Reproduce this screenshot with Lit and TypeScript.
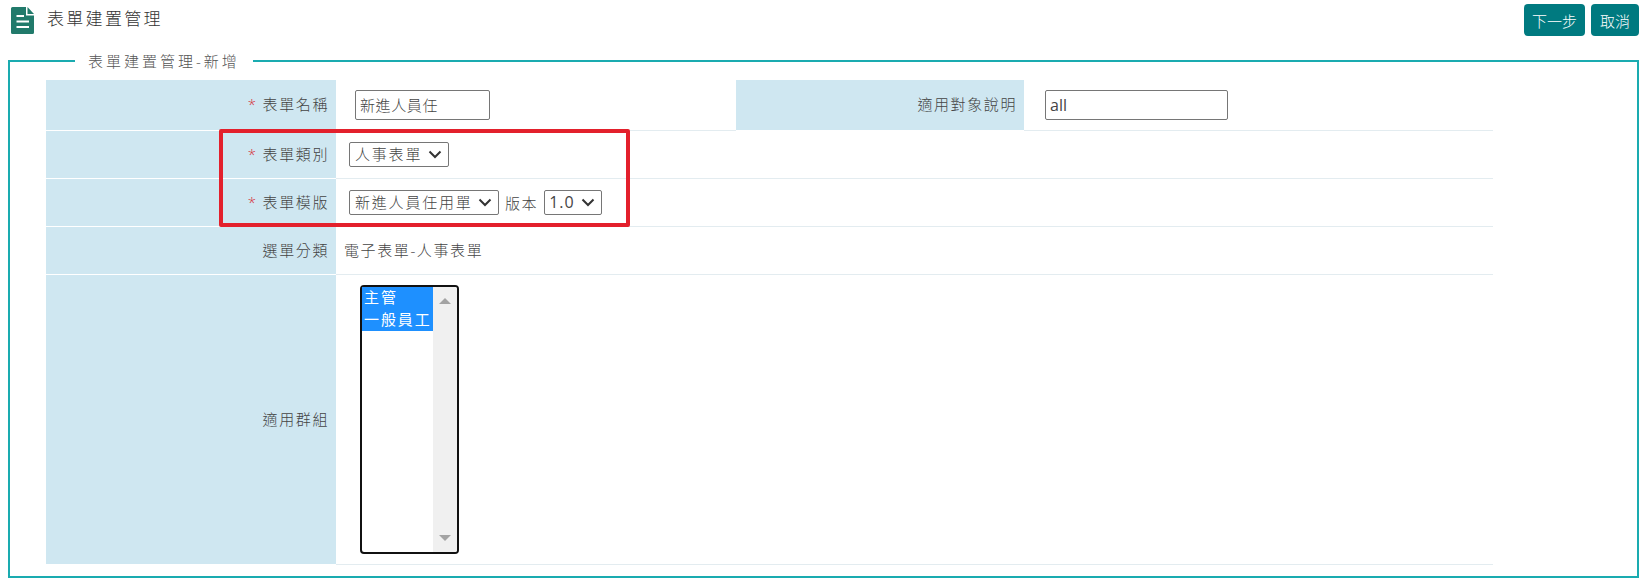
import { LitElement, html, css } from "lit";
import { customElement } from "lit/decorators.js";

@customElement("app-root")
export class AppRoot extends LitElement {
  static styles = css`
    :host { display: block; width: 1648px; height: 586px; position: relative; overflow: hidden; background: #fff;
      font-family: "Open Sans", "Noto Sans CJK TC", sans-serif; font-size: 15px; font-weight: 300; color: #444; }
    .top { display: flex; justify-content: space-between; height: 52px; box-sizing: border-box; padding: 4px 9px 0 11px; }
    .brand { display: flex; align-items: flex-start; gap: 13px; }
    .brand svg { display: block; margin-top: 3px; }
    .title { font-size: 17px; letter-spacing: 2.300px; line-height: 32px; margin-top: -1px; color: #333; }
    .btns { display: flex; gap: 6px; }
    button { height: 32px; border: 0; border-radius: 4px; background: #007a80; color: #fff; padding: 0; font: inherit; font-size: 15px; }
    .next { width: 61px; }
    .cancel { width: 48px; }
    fieldset { margin: 0 9px 0 8px; padding: 0 0 0 36px; height: 526px; box-sizing: border-box; border: 2px solid #1aabb0; min-width: 0; }
    legend { margin-left: 29px; padding: 0 13px; font-size: 15px; letter-spacing: 3px; line-height: 18px; color: #555; height: 18px; }
    table { border-collapse: collapse; table-layout: fixed; width: 1447px; margin-top: 10px; }
    td { padding: 0; border-bottom: 1px solid #e3ecf0; vertical-align: middle; }
    th { padding: 0 7px 2px 0; background: #cfe7f1; border-bottom: 1px solid #fff; font-weight: 300; text-align: right; font-size: 15px; letter-spacing: 1.600px; color: #444; }
    .r1 { height: 50px; }
    .r2 { height: 48px; }
    .r3 { height: 48px; }
    .r4 { height: 290px; }
    .star { color: #d6303a; margin-right: 5px; }
    .in { box-sizing: border-box; height: 30px; display: block; border: 1px solid #767676; border-radius: 2px; padding: 0 4px; background: #fff; color: #444; font: inherit; font-size: 15px; letter-spacing: 0.600px; }
    .in1 { width: 135px; margin-left: 19px; }
    .in2 { width: 183px; margin-left: 21px; letter-spacing: 0; font-size: 16px; font-weight: 400; }
    .cell { display: flex; align-items: center; padding-left: 13px; }
    .sel { box-sizing: border-box; height: 25px; display: flex; align-items: center; justify-content: space-between; border: 1px solid #767676; border-radius: 2px; padding: 0 6px 0 5px; font-size: 15px; letter-spacing: 1.800px; color: #444; line-height: 1; white-space: nowrap; }
    .s1 { width: 100px; }
    .s2 { width: 150px; }
    .s3 { width: 58px; font-size: 16px; font-weight: 400; letter-spacing: 1px; padding-left: 4px; }
    .ver { margin: 0 6px 0 6px; font-size: 15px; letter-spacing: 1.600px; color: #444; }
    .txt { padding: 0 0 2px 8px; font-size: 15px; letter-spacing: 1.600px; color: #444; }
    .list { box-sizing: border-box; width: 99px; height: 269px; margin: 10px 0 10px 24px; border: 2px solid #111; border-radius: 4px; display: flex; }
    .opts { flex: 1; min-width: 0; }
    .opt { height: 22px; box-sizing: border-box; line-height: 20px; background: #1e90ff; color: #fff; font-size: 15px; font-weight: 400; letter-spacing: 1.900px; padding-left: 2px; white-space: nowrap; }
    .bar { width: 24px; background: #f0f0f0; display: flex; flex-direction: column; justify-content: space-between; align-items: center; padding: 11px 0; box-sizing: border-box; border-radius: 0 2px 2px 0; }
    .mark { position: absolute; left: 219px; top: 129px; width: 411px; height: 98px; box-sizing: border-box; border: 4px solid #e3202c; border-radius: 2px; pointer-events: none; }
  `;

  private chevron() {
    return html`<svg width="14" height="9" viewBox="0 0 14 9"><path d="M1.500 1.500 7 7l5.500-5.500" fill="none" stroke="#333" stroke-width="2"/></svg>`;
  }

  render() {
    return html`
      <div class="top">
        <div class="brand">
          <svg width="23" height="27" viewBox="0 0 23 27">
            <path d="M1.500 0H15V8.500H23V25.500Q23 27 21.500 27H1.500Q0 27 0 25.500V1.500Q0 0 1.500 0Z" fill="#217a6b"/>
            <path d="M16.500 0 23 7H16.500Z" fill="#217a6b"/>
            <path d="M5.500 9H13M5.500 14.500H18M5.500 20H18" stroke="#fff" stroke-width="1.800"/>
          </svg>
          <div class="title">表單建置管理</div>
        </div>
        <div class="btns">
          <button class="next">下一步</button>
          <button class="cancel">取消</button>
        </div>
      </div>
      <fieldset>
        <legend>表單建置管理-新增</legend>
        <table>
          <colgroup><col style="width:290px" /><col style="width:400px" /><col style="width:288px" /><col style="width:469px" /></colgroup>
          <tr class="r1">
            <th><span class="star">*</span>表單名稱</th>
            <td><input class="in in1" .value=${"新進人員任"} /></td>
            <th>適用對象說明</th>
            <td><input class="in in2" .value=${"all"} /></td>
          </tr>
          <tr class="r2">
            <th><span class="star">*</span>表單類別</th>
            <td colspan="3"><div class="cell"><div class="sel s1">人事表單${this.chevron()}</div></div></td>
          </tr>
          <tr class="r2">
            <th><span class="star">*</span>表單模版</th>
            <td colspan="3"><div class="cell"><div class="sel s2">新進人員任用單${this.chevron()}</div><span class="ver">版本</span><div class="sel s3">1.0${this.chevron()}</div></div></td>
          </tr>
          <tr class="r3">
            <th>選單分類</th>
            <td colspan="3"><div class="txt">電子表單-人事表單</div></td>
          </tr>
          <tr class="r4">
            <th>適用群組</th>
            <td colspan="3">
              <div class="list">
                <div class="opts"><div class="opt">主管</div><div class="opt">一般員工</div></div>
                <div class="bar">
                  <svg width="12" height="6" viewBox="0 0 12 6"><path d="M6 0 12 6H0Z" fill="#a3a3a3"/></svg>
                  <svg width="12" height="6" viewBox="0 0 12 6"><path d="M0 0H12L6 6Z" fill="#a3a3a3"/></svg>
                </div>
              </div>
            </td>
          </tr>
        </table>
      </fieldset>
      <div class="mark"></div>
    `;
  }
}
